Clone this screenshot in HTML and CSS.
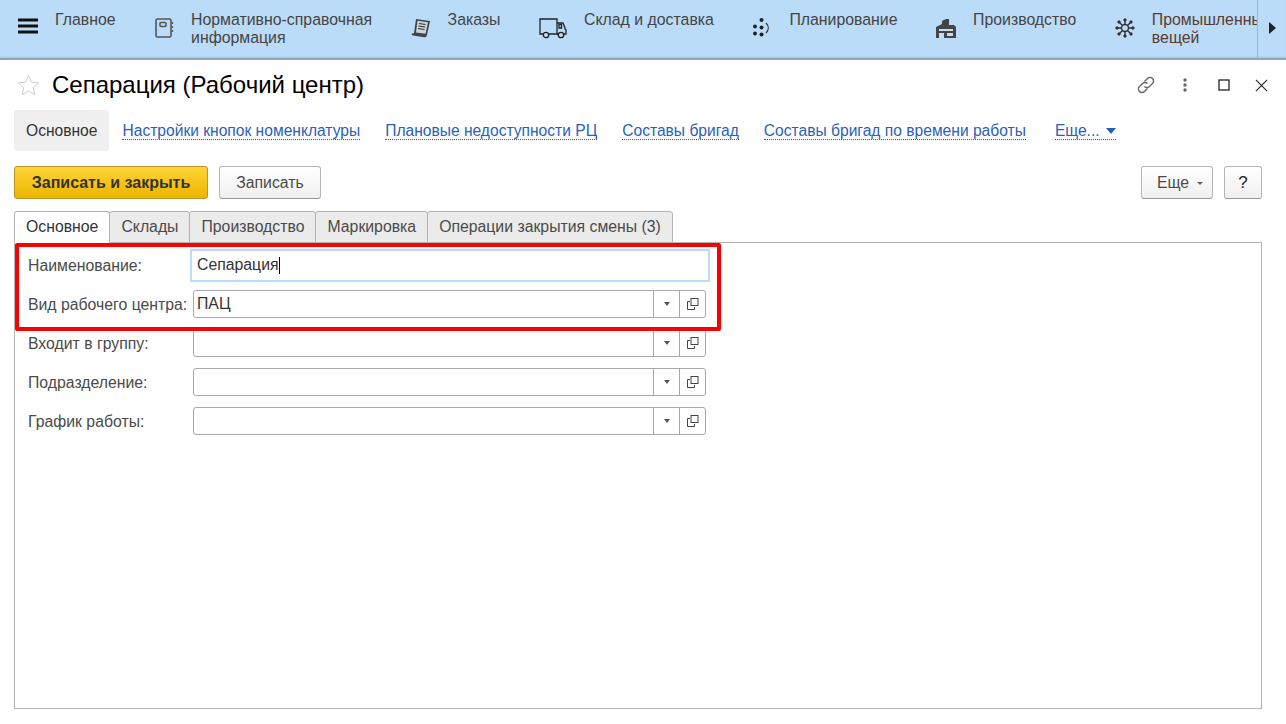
FILE: index.html
```html
<!DOCTYPE html>
<html>
<head>
  <title>Сепарация (Рабочий центр)</title>
  <meta name="viewport" content="width=device-width, initial-scale=1">
  <link rel="stylesheet" href="styles.css">
</head>
<body>
  <header class="topbar">
    <nav class="sections">
      <div class="section">
        <svg class="icon" width="20" height="16" viewBox="0 0 20 16"><path d="M0 2h20M0 8h20M0 14h20" stroke="#111" stroke-width="3"/></svg>
        <span>Главное</span>
      </div>
      <div class="section">
        <svg class="icon" width="20" height="20" viewBox="0 0 20 20" fill="none" stroke="#555" stroke-width="1.6"><rect x="2" y="1" width="15" height="18" rx="1.5"/><rect x="6" y="4.5" width="6" height="4" rx="1"/><path d="M18.5 4v2M18.5 8v2M18.5 12v2" stroke-width="1.2"/></svg>
        <span>Нормативно-справочная<br>информация</span>
      </div>
      <div class="section">
        <svg class="icon" width="20" height="20" viewBox="0 0 20 20"><path d="M5 1l14 2-3 14c-.3 1.500-1.500 2.500-3 2.300L2 17.500c-1-.2-1.500-1-1.400-1.800L3 15z" fill="#444"/><path d="M6.500 2.700l10.500 1.500-2.500 11.500-9.500-1.300z" fill="#c9d3dc"/><path d="M8 5.500l6.500 1M7.500 8l6.500 1M7 10.500l6.500 1" stroke="#333" stroke-width="1.100"/></svg>
        <span>Заказы</span>
      </div>
      <div class="section">
        <svg class="icon" width="28" height="22" viewBox="0 0 28 22" fill="none" stroke="#222" stroke-width="1.300"><path d="M4 16H1V1h17v15H10"/><path d="M18 5h6l2 5v1l1 1v4h-3M18 16h2"/><path d="M20 6.500h2.500v3.500H20z"/><circle cx="7" cy="17" r="2.700"/><circle cx="22" cy="17" r="2.700"/></svg>
        <span>Склад и доставка</span>
      </div>
      <div class="section">
        <svg class="icon" width="20" height="20" viewBox="0 0 20 20" fill="#222"><circle cx="9.500" cy="2" r="2"/><circle cx="3" cy="8.500" r="2"/><circle cx="9.500" cy="9.500" r="2"/><circle cx="3" cy="15.500" r="2"/><circle cx="9.500" cy="16.500" r="2"/><path d="M14 5c3 3 3 7 0 10" fill="none" stroke="#333" stroke-width="1.200"/></svg>
        <span>Планирование</span>
      </div>
      <div class="section">
        <svg class="icon" width="20" height="20" viewBox="0 0 20 20"><path d="M0 20V9l6-3V3l4-2h3v6h5l2 2v11z" fill="#444"/><path d="M3 11h14v2H3zM3 15h5v5H3zM11 15h6v3h-6z" fill="#c4dff5"/></svg>
        <span>Производство</span>
      </div>
      <div class="section">
        <svg class="icon" width="20" height="20" viewBox="0 0 20 20" fill="#333" stroke="#333"><path d="M10 1v18M1 10h18M3.500 3.500l13 13M16.500 3.500l-13 13" stroke-width="1.400"/><circle cx="10" cy="10" r="3.500" fill="#bbdcf8" stroke-width="1.400"/><circle cx="10" cy="2" r="1.200"/><circle cx="10" cy="18" r="1.200"/><circle cx="2" cy="10" r="1.200"/><circle cx="18" cy="10" r="1.200"/><circle cx="4" cy="4" r="1.200"/><circle cx="16" cy="4" r="1.200"/><circle cx="4" cy="16" r="1.200"/><circle cx="16" cy="16" r="1.200"/></svg>
        <span class="reddish">Промышленный интернет<br>вещей</span>
      </div>
    </nav>
    <div class="scroll-next"><i class="arrow"></i></div>
  </header>

  <main class="form">
    <div class="title-row">
      <svg class="star" width="23" height="22" viewBox="0 0 24 23" fill="none" stroke="#cccccc" stroke-width="1"><path d="M12 1.500l3.100 7.100 7.500.7-5.700 5 1.700 7.400-6.600-3.900-6.600 3.900 1.700-7.400-5.700-5 7.500-.7z"/></svg>
      <h1>Сепарация (Рабочий центр)</h1>
      <div class="window-tools">
        <svg class="tool-link" width="20" height="20" viewBox="0 0 20 20" fill="none" stroke="#666" stroke-width="1.400"><path d="M8.500 6.500l3-3a3.500 3.500 0 0 1 5 5l-3 3a3.500 3.500 0 0 1-5 0"/><path d="M11.500 13.500l-3 3a3.500 3.500 0 0 1-5-5l3-3a3.500 3.500 0 0 1 5 0"/></svg>
        <svg class="tool-dots" width="4" height="14" viewBox="0 0 4 14" fill="#666"><circle cx="2" cy="2" r="1.700"/><circle cx="2" cy="7" r="1.700"/><circle cx="2" cy="12" r="1.700"/></svg>
        <svg class="tool-max" width="12" height="12" viewBox="0 0 12 12" fill="none" stroke="#222" stroke-width="1.300"><rect x="1" y="1" width="10" height="10"/></svg>
        <svg class="tool-close" width="13" height="13" viewBox="0 0 14 14" stroke="#222" stroke-width="1.200"><path d="M1 1l12 12M13 1L1 13"/></svg>
      </div>
    </div>

    <div class="links">
      <span class="link-current">Основное</span>
      <a class="link">Настройки кнопок номенклатуры</a>
      <a class="link">Плановые недоступности РЦ</a>
      <a class="link">Составы бригад</a>
      <a class="link">Составы бригад по времени работы</a>
      <a class="link link-more">Еще...<i class="more-caret"></i></a>
    </div>

    <div class="commands">
      <button class="btn btn-primary">Записать и закрыть</button>
      <button class="btn btn-save">Записать</button>
      <div class="spacer"></div>
      <button class="btn btn-more">Еще<i class="mini-caret"></i></button>
      <button class="btn btn-help">?</button>
    </div>

    <div class="tabs">
      <div class="tab active">Основное</div>
      <div class="tab">Склады</div>
      <div class="tab">Производство</div>
      <div class="tab">Маркировка</div>
      <div class="tab">Операции закрытия смены (3)</div>
    </div>

    <section class="panel">
      <div class="row">
        <label>Наименование:</label>
        <div class="field field-focus"><span class="value">Сепарация</span><i class="text-caret"></i></div>
      </div>
      <div class="row">
        <label>Вид рабочего центра:</label>
        <div class="field">
          <span class="value">ПАЦ</span>
          <span class="field-btn"><i class="drop"></i></span>
          <span class="field-btn"><svg width="12" height="12" viewBox="0 0 12 12" fill="none" stroke="#444" stroke-width="1"><path d="M3 3.500H.5v8h7V9"/><rect x="4" y=".5" width="7" height="7"/></svg></span>
        </div>
      </div>
      <div class="row">
        <label>Входит в группу:</label>
        <div class="field">
          <span class="value"></span>
          <span class="field-btn"><i class="drop"></i></span>
          <span class="field-btn"><svg width="12" height="12" viewBox="0 0 12 12" fill="none" stroke="#444" stroke-width="1"><path d="M3 3.500H.5v8h7V9"/><rect x="4" y=".5" width="7" height="7"/></svg></span>
        </div>
      </div>
      <div class="row">
        <label>Подразделение:</label>
        <div class="field">
          <span class="value"></span>
          <span class="field-btn"><i class="drop"></i></span>
          <span class="field-btn"><svg width="12" height="12" viewBox="0 0 12 12" fill="none" stroke="#444" stroke-width="1"><path d="M3 3.500H.5v8h7V9"/><rect x="4" y=".5" width="7" height="7"/></svg></span>
        </div>
      </div>
      <div class="row">
        <label>График работы:</label>
        <div class="field">
          <span class="value"></span>
          <span class="field-btn"><i class="drop"></i></span>
          <span class="field-btn"><svg width="12" height="12" viewBox="0 0 12 12" fill="none" stroke="#444" stroke-width="1"><path d="M3 3.500H.5v8h7V9"/><rect x="4" y=".5" width="7" height="7"/></svg></span>
        </div>
      </div>
      <div class="highlight"></div>
    </section>
  </main>
</body>
</html>
```

FILE: styles.css
```css
* {
  box-sizing: border-box;
}

html, body {
  height: 100%;
  margin: 0;
  overflow: hidden;
}

body {
  font-family: "Liberation Sans", Arial, sans-serif;
  font-size: 15.6px;
  color: #4a4a4a;
  background: #ffffff;
}

/* top section bar */
.topbar {
  display: flex;
  height: 60px;
  background: #bbdcf8;
  border-bottom: 2px solid #8fa6bb;
  box-shadow: inset 0 -2px 2px -1px #a5c3dc;
}

.sections {
  display: flex;
  align-items: flex-start;
  gap: 38.5px;
  width: 1258px;
  padding: 11px 0 0 18px;
  overflow: hidden;
  white-space: nowrap;
  font-size: 15.85px;
  border-right: 1px solid #9bb5cb;
}

.section {
  display: flex;
  align-items: flex-start;
  gap: 17px;
  line-height: 18px;
  color: #444444;
  flex-shrink: 0;
}

.icon {
  display: block;
  margin-top: 7px;
  flex-shrink: 0;
}

.reddish {
  color: #5a3a30;
}

.scroll-next {
  flex: 1;
  display: flex;
  align-items: center;
  justify-content: center;
  padding-bottom: 2px;
}

.arrow {
  border-left: 7px solid #222;
  border-top: 6px solid transparent;
  border-bottom: 6px solid transparent;
}

/* form */
.form {
  padding: 0 24px 0 14px;
}

.title-row {
  display: flex;
  align-items: center;
  height: 50px;
  padding-left: 3px;
}

.star {
  margin-right: 12px;
}

h1 {
  margin: 0;
  font-size: 24px;
  font-weight: normal;
  color: #000000;
}

.window-tools {
  margin-left: auto;
  margin-right: -6px;
  display: flex;
  align-items: center;
}

.tool-dots {
  margin-left: 27px;
}

.tool-max {
  margin-left: 31px;
}

.tool-close {
  margin-left: 25px;
}

.links {
  display: flex;
  align-items: center;
  gap: 25px;
  height: 41px;
}

.link-current {
  display: block;
  padding: 12px;
  line-height: 17px;
  margin-right: -12px;
  background: #f0f0f0;
  border-radius: 3px;
  color: #333333;
}

.link {
  color: #2a5fb5;
  border-bottom: 1px dotted #2a5fb5;
  line-height: 16px;
  margin-top: 1px;
}

.link-more {
  display: flex;
  align-items: center;
  margin-left: 4px;
}

.more-caret {
  margin-left: 6px;
  border-top: 6px solid #1f5fbf;
  border-left: 5px solid transparent;
  border-right: 5px solid transparent;
}

.commands {
  display: flex;
  gap: 11px;
  height: 33px;
  margin-top: 15px;
}

.spacer {
  flex: 1;
}

.btn {
  height: 33px;
  padding: 0;
  font-family: inherit;
  font-size: 15.8px;
  color: #4a4a4a;
  background: linear-gradient(#ffffff, #f0f0f0);
  border: 1px solid #b5b5b5;
  border-bottom-color: #999;
  border-radius: 3px;
}

.btn-primary {
  width: 194px;
  font-size: 16px;
  font-weight: bold;
  color: #333333;
  background: linear-gradient(#ffd535, #ecb400);
  border-color: #b8962a;
}

.btn-save {
  width: 102px;
}

.btn-more {
  width: 72px;
  padding-left: 6px;
}

.mini-caret {
  display: inline-block;
  margin-left: 8px;
  vertical-align: middle;
  border-top: 3px solid #666;
  border-left: 3px solid transparent;
  border-right: 3px solid transparent;
}

.btn-help {
  width: 38px;
  font-size: 17px;
  color: #222222;
}

/* tabs */
.tabs {
  display: flex;
  height: 32px;
  margin-top: 12px;
  position: relative;
  z-index: 1;
}

.tab {
  height: 32px;
  padding: 0 11px;
  line-height: 29px;
  margin-left: -1px;
  font-size: 15.8px;
  color: #4a4a4a;
  background: #ebebeb;
  border: 1px solid #b3b3b3;
  border-radius: 3px 3px 0 0;
}

.tab:first-child {
  margin-left: 0;
}

.tab.active {
  background: #ffffff;
  color: #333333;
  border-bottom-color: #ffffff;
}

.panel {
  position: relative;
  height: 467px;
  margin-top: -1px;
  padding: 8px 13px 0;
  background: #ffffff;
  border: 1px solid #b3b3b3;
  display: flex;
  flex-direction: column;
  gap: 11px;
}

.row {
  display: flex;
  align-items: center;
  height: 28px;
}

.row label {
  width: 165px;
  flex-shrink: 0;
  padding-top: 1px;
  font-size: 15.8px;
}

.field {
  display: flex;
  width: 513px;
  height: 28px;
  border: 1px solid #a8a8a8;
  border-radius: 3px;
  background: #ffffff;
}

.field-focus {
  width: 520px;
  height: 33px;
  margin-left: -3px;
  align-items: center;
  border: 2px solid #bbdcf8;
  border-radius: 0;
  padding-left: 5px;
}

.field-focus .value {
  flex: none;
  padding: 0;
  color: #333333;
}

.text-caret {
  display: block;
  width: 1px;
  height: 17px;
  background: #000;
}

.value {
  flex: 1;
  padding-left: 3px;
  line-height: 26px;
  font-size: 15.8px;
  color: #333333;
}

.field-btn {
  display: flex;
  align-items: center;
  justify-content: center;
  width: 26px;
  border-left: 1px solid #a8a8a8;
}

.drop {
  border-top: 4px solid #555;
  border-left: 3.500px solid transparent;
  border-right: 3.500px solid transparent;
}

/* red annotation frame */
.highlight {
  position: absolute;
  left: 0;
  top: 0;
  width: 706px;
  height: 88px;
  border: 4px solid #fb0000;
  border-radius: 2px;
  pointer-events: none;
}
```
